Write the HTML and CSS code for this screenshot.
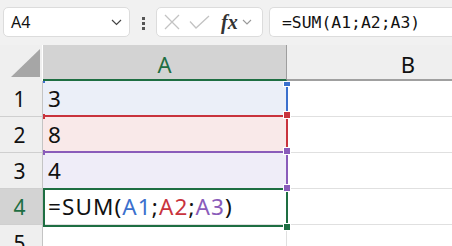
FILE: index.html
```html
<!DOCTYPE html>
<html lang="en">
<head>
    <meta charset="UTF-8">
    <title>Excel - SUM formula</title>
    <link rel="stylesheet" href="styles.css">
</head>
<body>
    <div class="toolbar">
        <div class="namebox">
            <span>A4</span>
            <svg class="chev" width="11" height="7" viewBox="0 0 11 7"><path d="M1 1l4.5 4.5L10 1" fill="none" stroke="#444" stroke-width="1.2"/></svg>
        </div>
        <div class="dots"><i></i><i></i><i></i></div>
        <div class="fxbox">
            <svg width="16" height="16" viewBox="0 0 16 16"><path d="M1 1l14 14M15 1L1 15" stroke="#c3c3c3" stroke-width="1.3"/></svg>
            <svg width="21" height="14" viewBox="0 0 21 14"><path d="M1 6.5l6 6.5L20 1" fill="none" stroke="#c3c3c3" stroke-width="1.3"/></svg>
            <span class="fx">fx</span>
            <svg width="10" height="6" viewBox="0 0 10 6"><path d="M1 1l4 4 4-4" fill="none" stroke="#999" stroke-width="1.1"/></svg>
        </div>
        <div class="formula">=SUM(A1;A2;A3)</div>
    </div>

    <div class="sheet">
        <div class="corner"><div class="tri"></div></div>
        <div class="colhead sel">A</div>
        <div class="colhead">B</div>

        <div class="rowhead">1</div>
        <div class="cell fill-1">3</div>
        <div class="cell"></div>

        <div class="rowhead">2</div>
        <div class="cell fill-2">8</div>
        <div class="cell"></div>

        <div class="rowhead">3</div>
        <div class="cell fill-3">4</div>
        <div class="cell"></div>

        <div class="rowhead sel">4</div>
        <div class="cell editing">=SUM(<span class="ref-1">A1</span>;<span class="ref-2">A2</span>;<span class="ref-3">A3</span>)</div>
        <div class="cell"></div>

        <div class="rowhead">5</div>
        <div class="cell"></div>
        <div class="cell"></div>

        <!-- range highlights drawn over the grid -->
        <div class="range r1"><b class="knob"></b></div>
        <div class="range r2"><b class="knob"></b></div>
        <div class="range r3"><b class="knob"></b></div>
        <div class="range r4"><b class="knob top"></b><b class="knob"></b></div>
    </div>
</body>
</html>
```

FILE: styles.css
```css
body {
    margin: 0;
    width: 452px;
    height: 246px;
    overflow: hidden;
    background: #fff;
    font-family: "Segoe UI", "Noto Sans", Arial, sans-serif;
}

.toolbar {
    height: 45px;
    box-sizing: border-box;
    background: #f1f1f1;
    display: flex;
    align-items: flex-start;
    padding: 7px 0 0 3px;
}

.namebox,
.fxbox,
.formula {
    height: 30px;
    box-sizing: border-box;
    background: #fff;
    border: 1px solid #dcdcdc;
    border-radius: 5px;
    display: flex;
    align-items: center;
}

.namebox {
    width: 127px;
    padding: 0 7px 0 7px;
    justify-content: space-between;
    font-size: 16px;
    color: #111;
}

.dots {
    width: 26px;
    display: flex;
    flex-direction: column;
    align-items: center;
    gap: 2px;
    padding-top: 10px;
}

.dots i {
    width: 3px;
    height: 3px;
    background: #555;
}

.fxbox {
    width: 107px;
    padding: 0 5px 0 7px;
    gap: 10px;
}

.fxbox svg:nth-child(2) {
    margin-left: -1px;
}

.fx {
    font-family: "Liberation Serif", serif;
    font-style: italic;
    font-weight: bold;
    font-size: 20px;
    color: #333;
    margin-left: 1px;
    margin-right: -6px;
}

.formula {
    flex: 1;
    margin-left: 6px;
    border-right: none;
    border-radius: 5px 0 0 5px;
    padding-left: 12px;
    font-family: "DejaVu Sans Mono", monospace;
    font-size: 16.4px;
    color: #111;
}

.sheet {
    position: relative;
    height: 201px;
    overflow: hidden;
    display: grid;
    grid-template-columns: 43px 244px 242px;
    grid-template-rows: repeat(6, 36px);
}

.corner {
    background: #efefef;
    border-right: 1px solid #fff;
    position: relative;
}

.tri {
    position: absolute;
    left: 11px;
    top: 4px;
    width: 29px;
    height: 28px;
    background: #a6a6a6;
    clip-path: polygon(100% 0, 100% 100%, 0 100%);
}

.colhead {
    background: #efefef;
    border-bottom: 2px solid #a0a0a0;
    display: flex;
    align-items: center;
    justify-content: center;
    font-size: 22px;
    color: #111;
    padding-top: 3px;
}

.colhead.sel {
    background: #d3d3d3;
    color: #1e6e42;
    border-bottom-color: #1e6e42;
    border-right: 1px solid #9e9e9e;
}

.rowhead {
    background: #efefef;
    border-right: 1px solid #c4c4c4;
    border-bottom: 1px solid #cfcfcf;
    display: flex;
    align-items: center;
    justify-content: center;
    font-size: 21px;
    color: #111;
    padding-right: 3px;
}

.rowhead.sel {
    background: #d3d3d3;
    color: #1e6e42;
}

.cell {
    border-right: 1px solid #e0e0e0;
    border-bottom: 1px solid #e0e0e0;
    display: flex;
    align-items: center;
    padding-left: 5px;
    font-size: 22.5px;
    color: #111;
    white-space: nowrap;
}

.cell.editing {
    letter-spacing: 1.1px;
}

.fill-1 { background: #ebeff8; }
.fill-2 { background: #f9e9e9; }
.fill-3 { background: #efedf8; }

.ref-1 { color: #3b70cd; }
.ref-2 { color: #c9333d; }
.ref-3 { color: #8a5cba; }

.range {
    position: absolute;
    left: 43px;
    width: 245px;
    box-sizing: border-box;
    border-right: 2px solid;
}

.range::before {
    content: "";
    position: absolute;
    left: 0;
    top: -3px;
    width: 2px;
    height: 5px;
    background: currentColor;
}

.r1 { top: 36px; height: 35px; color: #3b70cd; border-color: #3b70cd; }
.r2 { top: 70px; height: 37px; color: #c9333d; border-color: #c9333d; border-top: 2px solid; }
.r3 { top: 106px; height: 38px; color: #8a5cba; border-color: #8a5cba; border-top: 2px solid; }
.r4 { top: 143px; height: 39px; color: #1e6e42; border: 2px solid #1e6e42; }
.r1::before { top: 0; height: 2px; }
.r4::before { display: none; }

.knob {
    position: absolute;
    right: -4px;
    top: -5px;
    width: 6px;
    height: 6px;
    background: currentColor;
    box-shadow: 0 0 0 1px #fff;
}

.r1 .knob { top: 1px; height: 4px; }
.r4 .knob { top: auto; bottom: -5px; }
.r4 .knob.top { top: -5px; bottom: auto; background: #8a5cba; }
```
